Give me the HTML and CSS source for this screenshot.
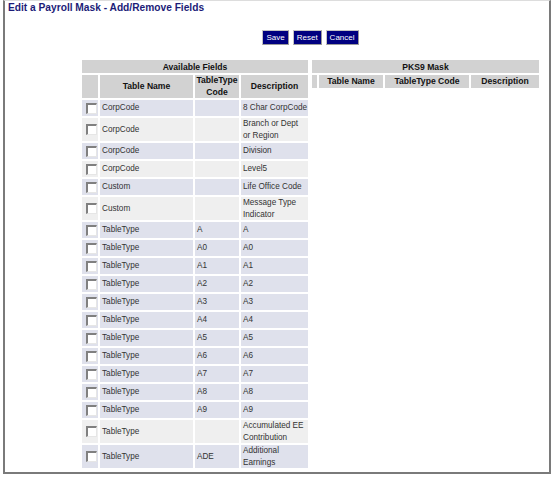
FILE: index.html
```html
<!DOCTYPE html>
<html>
<head>
<meta charset="utf-8">
<link rel="stylesheet" href="styles.css">
</head>
<body>
<div class="frame">
  <div class="title">Edit a Payroll Mask - Add/Remove Fields</div>
  <div class="wrap">
    <div class="buttons">
      <span class="btn">Save</span>
      <span class="btn">Reset</span>
      <span class="btn">Cancel</span>
    </div>
    <div class="tables">
      <div class="tbl left">
        <div class="cap">Available Fields</div>
        <div class="row head">
          <div class="c"></div>
          <div class="c">Table Name</div>
          <div class="c">TableType<br>Code</div>
          <div class="c">Description</div>
        </div>
        <div class="row odd"><div class="c cb"><span class="box"></span></div><div class="c">CorpCode</div><div class="c"></div><div class="c">8 Char CorpCode</div></div>
        <div class="row even"><div class="c cb"><span class="box"></span></div><div class="c">CorpCode</div><div class="c"></div><div class="c">Branch or Dept<br>or Region</div></div>
        <div class="row odd"><div class="c cb"><span class="box"></span></div><div class="c">CorpCode</div><div class="c"></div><div class="c">Division</div></div>
        <div class="row even"><div class="c cb"><span class="box"></span></div><div class="c">CorpCode</div><div class="c"></div><div class="c">Level5</div></div>
        <div class="row odd"><div class="c cb"><span class="box"></span></div><div class="c">Custom</div><div class="c"></div><div class="c">Life Office Code</div></div>
        <div class="row even"><div class="c cb"><span class="box"></span></div><div class="c">Custom</div><div class="c"></div><div class="c">Message Type<br>Indicator</div></div>
        <div class="row odd"><div class="c cb"><span class="box"></span></div><div class="c">TableType</div><div class="c">A</div><div class="c">A</div></div>
        <div class="row odd"><div class="c cb"><span class="box"></span></div><div class="c">TableType</div><div class="c">A0</div><div class="c">A0</div></div>
        <div class="row odd"><div class="c cb"><span class="box"></span></div><div class="c">TableType</div><div class="c">A1</div><div class="c">A1</div></div>
        <div class="row odd"><div class="c cb"><span class="box"></span></div><div class="c">TableType</div><div class="c">A2</div><div class="c">A2</div></div>
        <div class="row odd"><div class="c cb"><span class="box"></span></div><div class="c">TableType</div><div class="c">A3</div><div class="c">A3</div></div>
        <div class="row odd"><div class="c cb"><span class="box"></span></div><div class="c">TableType</div><div class="c">A4</div><div class="c">A4</div></div>
        <div class="row odd"><div class="c cb"><span class="box"></span></div><div class="c">TableType</div><div class="c">A5</div><div class="c">A5</div></div>
        <div class="row odd"><div class="c cb"><span class="box"></span></div><div class="c">TableType</div><div class="c">A6</div><div class="c">A6</div></div>
        <div class="row odd"><div class="c cb"><span class="box"></span></div><div class="c">TableType</div><div class="c">A7</div><div class="c">A7</div></div>
        <div class="row odd"><div class="c cb"><span class="box"></span></div><div class="c">TableType</div><div class="c">A8</div><div class="c">A8</div></div>
        <div class="row odd"><div class="c cb"><span class="box"></span></div><div class="c">TableType</div><div class="c">A9</div><div class="c">A9</div></div>
        <div class="row even"><div class="c cb"><span class="box"></span></div><div class="c">TableType</div><div class="c"></div><div class="c">Accumulated EE<br>Contribution</div></div>
        <div class="row odd"><div class="c cb"><span class="box"></span></div><div class="c">TableType</div><div class="c">ADE</div><div class="c">Additional<br>Earnings</div></div>
      </div>
      <div class="tbl right">
        <div class="cap">PKS9 Mask</div>
        <div class="row head">
          <div class="c"></div>
          <div class="c">Table Name</div>
          <div class="c">TableType Code</div>
          <div class="c">Description</div>
        </div>
      </div>
    </div>
  </div>
</div>
</body>
</html>
```

FILE: styles.css
```css
html, body {
  margin: 0;
  padding: 0;
  background: #ffffff;
}
body {
  font-family: "Liberation Sans", Arial, sans-serif;
  color: #333333;
}
.frame {
  box-sizing: border-box;
  margin-left: 3px;
  width: 548px;
  height: 474px;
  border-top: 1px solid #dddddd;
  border-left: 2px solid #7a7a7a;
  border-right: 2px solid #7a7a7a;
  border-bottom: 2px solid #7a7a7a;
}
.title {
  padding-left: 3px;
  font-size: 10.2px;
  line-height: 14px;
  font-weight: bold;
  color: #1c1c78;
}
.wrap {
  margin-left: 75px;
  width: 461px;
}
.buttons {
  margin-top: 15px;
  display: flex;
  justify-content: center;
  gap: 4px;
}
.btn {
  display: block;
  height: 15px;
  box-sizing: border-box;
  padding: 0 3px;
  border: 1px solid #c4c4c4;
  border-right-color: #9a9a9a;
  border-bottom-color: #9a9a9a;
  background: #000080;
  color: #ffffff;
  font-size: 8px;
  line-height: 13px;
}
.tables {
  margin-top: 13px;
  display: flex;
}
.tbl {
  display: flex;
  flex-direction: column;
  gap: 2px;
  padding: 2px;
  font-size: 8.2px;
  line-height: 11.5px;
  white-space: nowrap;
}
.left { width: 226px; }
.right { width: 227px; }
.cap {
  background: #d2d2d2;
  color: #111111;
  font-weight: bold;
  text-align: center;
  line-height: 12px;
  padding-top: 1px;
  font-size: 8.6px;
}
.row {
  display: grid;
  gap: 2px;
  min-height: 16px;
}
.left .row { grid-template-columns: 16px 93px 44px 67px; }
.right .row { grid-template-columns: 5px 64px 84px 68px; }
.c {
  display: flex;
  align-items: center;
  padding: 0 0 0 2px;
  overflow: hidden;
}
.head .c {
  background: #d2d2d2;
  color: #111111;
  font-weight: bold;
  font-size: 8.6px;
  justify-content: center;
  text-align: center;
  padding: 0;
}
.right .head { min-height: 13px; }
.odd .c { background: #dfe1ec; }
.even .c { background: #efefef; }
.cb { padding-left: 4px; }
.box {
  display: block;
  box-sizing: border-box;
  width: 11px;
  height: 11px;
  background: #ffffff;
  border-top: 2px solid #808080;
  border-left: 2px solid #808080;
  border-right: 1px solid #e6e6e6;
  border-bottom: 1px solid #e6e6e6;
}
```
